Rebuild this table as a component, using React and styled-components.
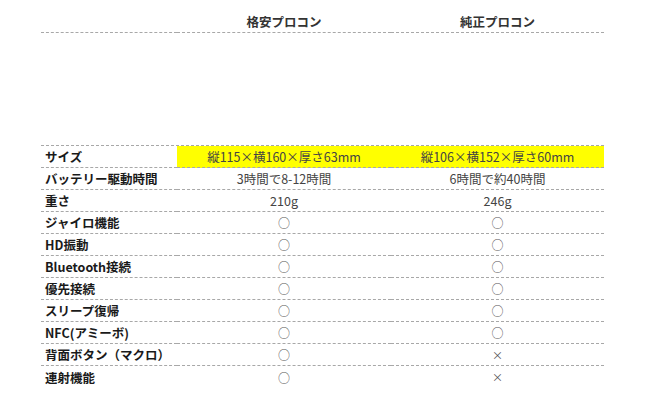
import React from 'react';
import styled, { createGlobalStyle } from 'styled-components';

const Global = createGlobalStyle`
  body {
    margin: 0;
    background: #fff;
    font-family: "Noto Sans CJK JP", "Noto Sans", sans-serif;
  }
  * { box-sizing: border-box; }
`;

const Page = styled.div`
  padding: 10px 0 0 41px;
`;

const Table = styled.div`
  width: 563px;
  display: grid;
  grid-template-columns: 136px 214px 213px;
`;

const Cell = styled.div`
  height: 22px;
  display: flex;
  align-items: center;
  justify-content: ${(p) => (p.$label ? 'flex-start' : 'center')};
  padding-left: ${(p) => (p.$label ? '4px' : '0')};
  border-bottom: ${(p) => (p.$last ? 'none' : '1px dashed #a8a8a8')};
  background: ${(p) => (p.$hl ? '#ffff00' : 'transparent')};
  font-size: 12.5px;
  font-weight: ${(p) => (p.$label ? 700 : 400)};
  color: ${(p) => (p.$label ? '#1a1a1a' : '#444')};
  white-space: nowrap;
`;

const HeadCell = styled(Cell)`
  height: 23px;
  font-weight: 700;
  color: #333;
`;

const Spacer = styled.div`
  grid-column: 1 / -1;
  height: 113px;
  border-bottom: 1px dashed #a8a8a8;
`;

const Mark = styled.span`
  font-size: ${(p) => (p.$x ? '11px' : '12px')};
  color: #555;
`;

const rows = [
  ['サイズ', '縦115×横160×厚さ63mm', '縦106×横152×厚さ60mm', true],
  ['バッテリー駆動時間', '3時間で8-12時間', '6時間で約40時間'],
  ['重さ', '210g', '246g'],
  ['ジャイロ機能', 'o', 'o'],
  ['HD振動', 'o', 'o'],
  ['Bluetooth接続', 'o', 'o'],
  ['優先接続', 'o', 'o'],
  ['スリープ復帰', 'o', 'o'],
  ['NFC(アミーボ)', 'o', 'o'],
  ['背面ボタン（マクロ）', 'o', 'x'],
  ['連射機能', 'o', 'x'],
];

function Value({ v }) {
  if (v === 'o') return <Mark>○</Mark>;
  if (v === 'x') return <Mark $x>×</Mark>;
  return v;
}

export default function App() {
  return (
    <Page>
      <Global />
      <Table>
        <HeadCell $label />
        <HeadCell>格安プロコン</HeadCell>
        <HeadCell>純正プロコン</HeadCell>
        <Spacer />
        {rows.map(([label, a, b, hl], i) => {
          const last = i === rows.length - 1;
          return (
            <React.Fragment key={label}>
              <Cell $label $last={last}>{label}</Cell>
              <Cell $hl={hl} $last={last}><Value v={a} /></Cell>
              <Cell $hl={hl} $last={last}><Value v={b} /></Cell>
            </React.Fragment>
          );
        })}
      </Table>
    </Page>
  );
}
